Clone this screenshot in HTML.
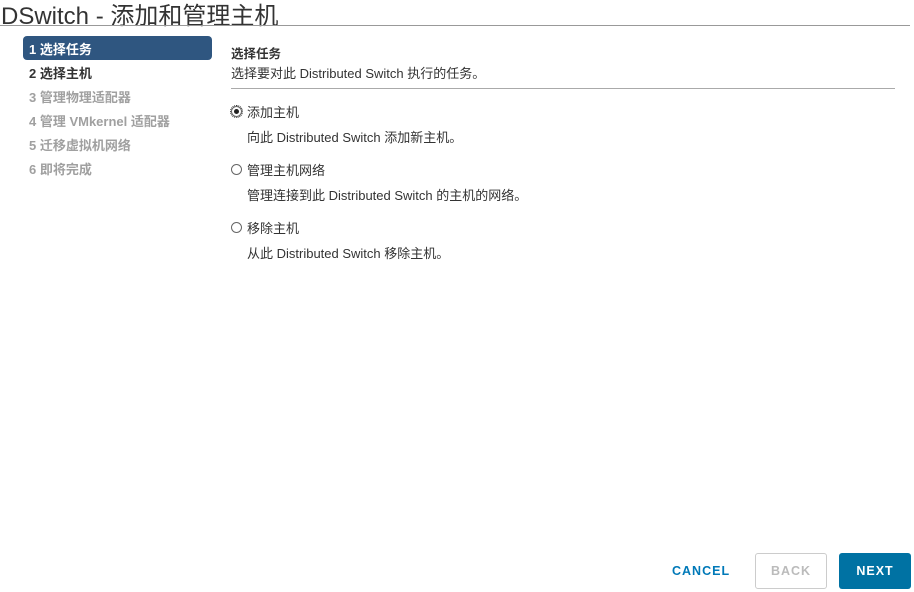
<!DOCTYPE html>
<html><head><meta charset="utf-8"><style>
body{margin:0;width:914px;height:592px;background:#fff;position:relative;overflow:hidden;font-family:"Liberation Sans","Noto Sans CJK SC",sans-serif;color:#333}
.a{position:absolute;white-space:nowrap}
.nav{font-size:13px;font-weight:bold;left:29px}
.g{color:#a0a0a0}
.t{font-size:13px;color:#333}
.r{position:absolute;width:11px;height:11px;border:1px solid #666;border-radius:50%;box-sizing:border-box;left:231px}
</style></head><body>
<div class="a" style="left:1px;top:-4px;font-size:24px;color:#333">DSwitch - 添加和管理主机</div>
<div class="a" style="left:0;top:25px;width:910px;height:1px;background:#999"></div>
<div class="a" style="left:23px;top:36px;width:189px;height:24px;background:#2f5680;border-radius:4px"></div>
<div class="a nav" style="top:39px;color:#fff">1 选择任务</div>
<div class="a nav" style="top:63px;color:#333">2 选择主机</div>
<div class="a nav g" style="top:87px">3 管理物理适配器</div>
<div class="a nav g" style="top:111px">4 管理 VMkernel 适配器</div>
<div class="a nav g" style="top:135px">5 迁移虚拟机网络</div>
<div class="a nav g" style="top:159px">6 即将完成</div>
<div class="a" style="left:231px;top:43px;font-size:12.5px;font-weight:bold">选择任务</div>
<div class="a t" style="left:231px;top:63px">选择要对此 Distributed Switch 执行的任务。</div>
<div class="a" style="left:231px;top:88px;width:664px;height:1px;background:#aaa"></div>
<div class="r" style="top:106px;outline:1px dotted #333;outline-offset:0"><div style="position:absolute;left:2px;top:2px;width:5px;height:5px;border-radius:50%;background:#222"></div></div>
<div class="a t" style="left:247px;top:102px">添加主机</div>
<div class="a t" style="left:247px;top:127px">向此 Distributed Switch 添加新主机。</div>
<div class="r" style="top:164px"></div>
<div class="a t" style="left:247px;top:160px">管理主机网络</div>
<div class="a t" style="left:247px;top:185px">管理连接到此 Distributed Switch 的主机的网络。</div>
<div class="r" style="top:222px"></div>
<div class="a t" style="left:247px;top:218px">移除主机</div>
<div class="a t" style="left:247px;top:243px">从此 Distributed Switch 移除主机。</div>
<div class="a" style="left:672px;top:564px;font-size:12.5px;font-weight:bold;color:#0079b8;letter-spacing:1px">CANCEL</div>
<div class="a" style="left:755px;top:553px;width:72px;height:36px;border:1px solid #ccc;border-radius:3px;box-sizing:border-box;text-align:center;line-height:34px;font-size:12.5px;font-weight:bold;color:#bbb;letter-spacing:1px">BACK</div>
<div class="a" style="left:839px;top:553px;width:72px;height:36px;background:#0072a3;border-radius:3px;text-align:center;line-height:36px;font-size:12.5px;font-weight:bold;color:#fff;letter-spacing:1px">NEXT</div>
</body></html>
